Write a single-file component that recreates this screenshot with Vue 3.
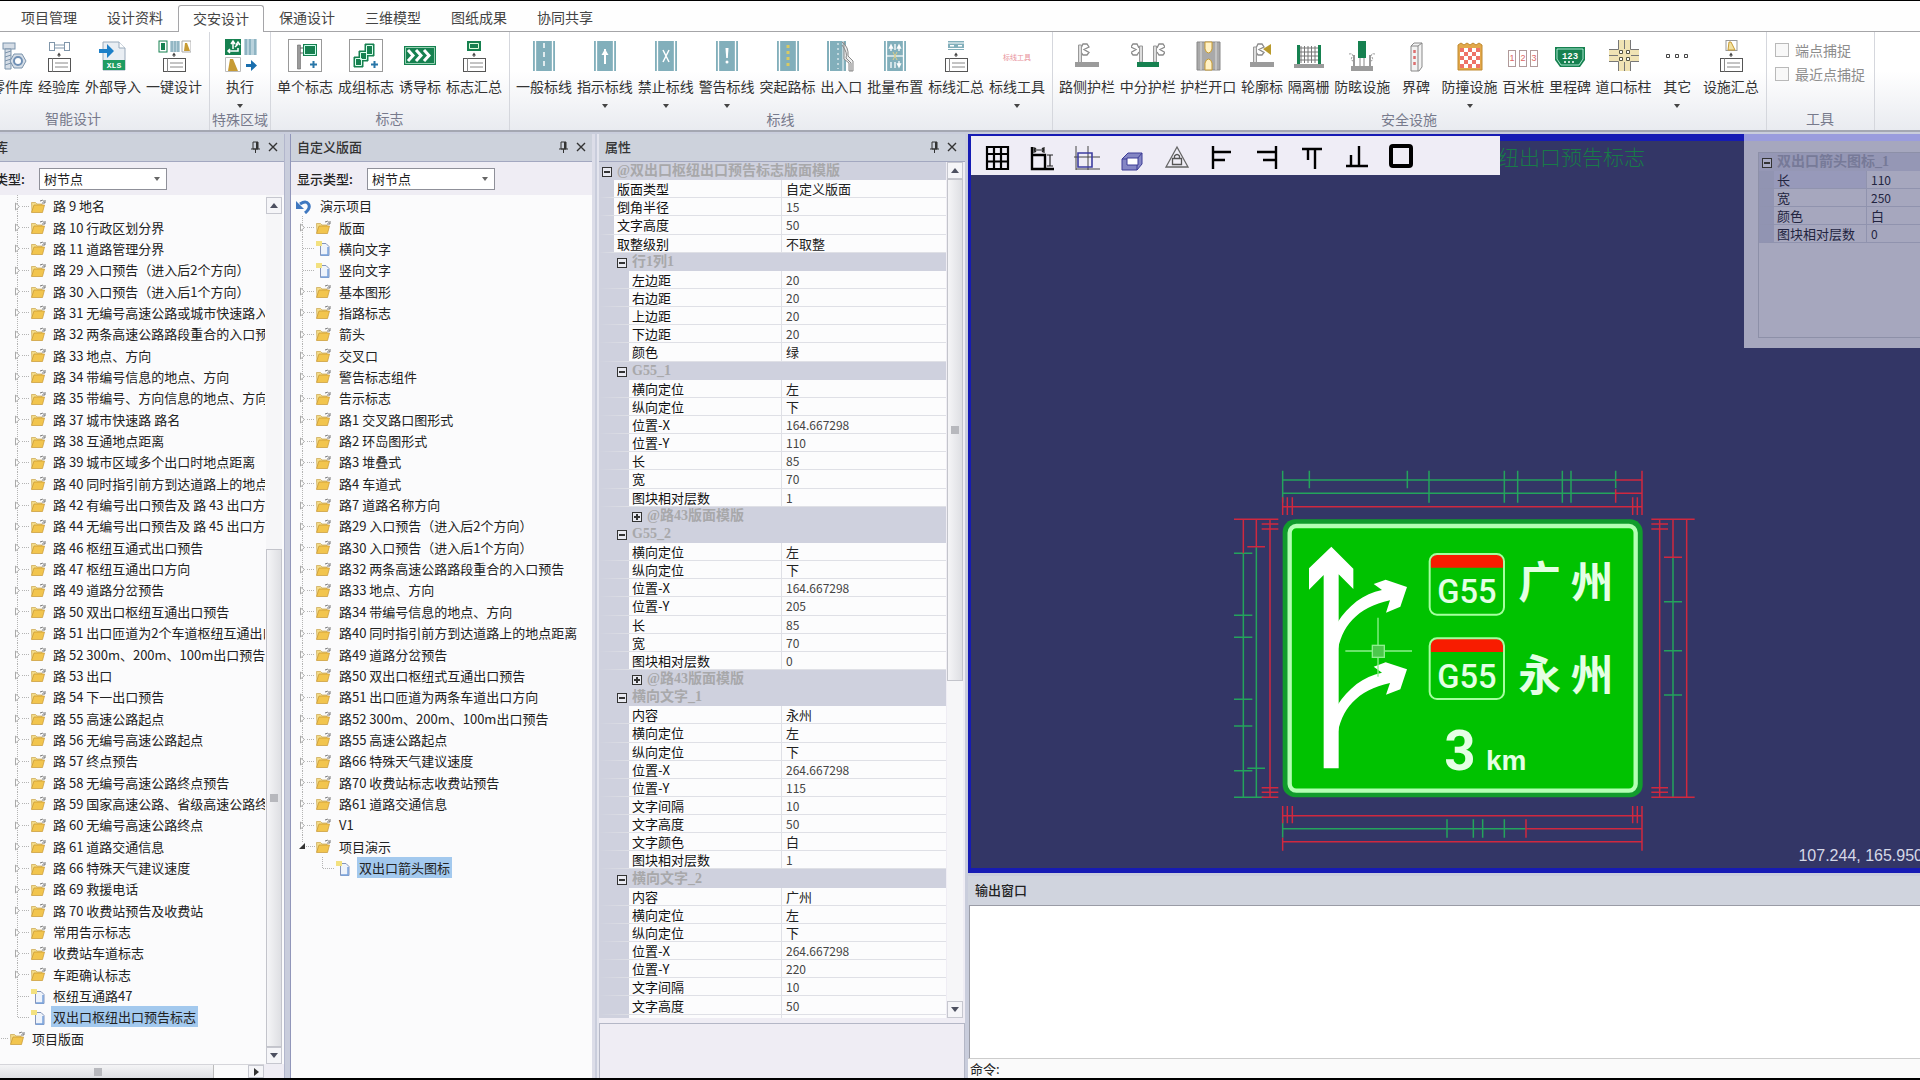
<template>
  <div class="app">
    <nav class="tabs">
      <button v-for="t in tabs" :key="t" class="tab" :class="{ active: t === activeTab }" @click="activeTab = t">{{ t }}</button>
    </nav>

    <div class="ribbon">
      <section v-for="g in groups" :key="g.name" class="group" :class="g.cls">
        <div class="tools">
          <button v-for="b in g.items" :key="b.label" class="tool">
            <svg class="tool-icon" viewBox="0 0 34 34" v-html="icons[b.icon]"></svg>
            <span class="tool-label">{{ b.label }}</span>
            <i v-if="b.more" class="caret"></i>
          </button>
        </div>
        <div class="group-name">{{ g.name }}</div>
      </section>
      <section class="group snap">
        <label class="check"><input type="checkbox" disabled />端点捕捉</label>
        <label class="check"><input type="checkbox" disabled />最近点捕捉</label>
        <div class="group-name">工具</div>
      </section>
    </div>

    <main class="dock">
      <aside v-for="p in treePanels" :key="p.id" class="panel" :class="p.id">
        <header class="panel-head">
          <h2>{{ p.title }}</h2>
          <button class="head-btn" aria-label="固定"><svg viewBox="0 0 12 14" v-html="pin"></svg></button>
          <button class="head-btn" aria-label="关闭"><svg viewBox="0 0 12 14" v-html="cross"></svg></button>
        </header>
        <div class="filter">
          <label :for="p.id + '-type'">显示类型:</label>
          <span class="combo">
            <select :id="p.id + '-type'"><option>树节点</option></select>
          </span>
        </div>
        <div class="tree-wrap">
          <ul class="tree">
            <li v-for="n in p.nodes" :key="n.text" class="node" :class="n.kind">
              <svg v-if="n.kind !== 'root'" class="branch" viewBox="0 0 16 22" v-html="branches[n.kind]"></svg>
              <svg class="node-icon" viewBox="0 0 16 16" v-html="nodeIcons[n.icon]"></svg>
              <span class="node-label" :class="{ selected: n.selected }">{{ n.text }}</span>
            </li>
          </ul>
          <div v-if="p.id === 'library'" class="vscroll">
            <button class="sb up" aria-label="向上"></button>
            <div class="thumb low"></div>
            <button class="sb down" aria-label="向下"></button>
          </div>
        </div>
        <div v-if="p.id === 'library'" class="hscroll">
          <div class="hthumb"></div>
          <button class="sb right" aria-label="向右"></button>
        </div>
      </aside>

      <aside class="panel props">
        <header class="panel-head">
          <h2>属性</h2>
          <button class="head-btn" aria-label="固定"><svg viewBox="0 0 12 14" v-html="pin"></svg></button>
          <button class="head-btn" aria-label="关闭"><svg viewBox="0 0 12 14" v-html="cross"></svg></button>
        </header>
        <div class="props-body">
          <div class="props-clip">
            <table class="grid">
              <colgroup><col class="col-name" /><col /></colgroup>
              <tbody>
                <tr v-for="(r, i) in rows" :key="i">
                  <th v-if="r.head" colspan="2" :class="'lv' + r.level">
                    <button class="fold" :class="{ closed: r.closed }" :aria-label="r.head"></button>{{ r.head }}
                  </th>
                  <template v-else>
                    <td class="name" :class="'lv' + r.level">{{ r.name }}</td>
                    <td class="value" :class="{ num: /^\d/.test(r.value) }">{{ r.value }}</td>
                  </template>
                </tr>
              </tbody>
            </table>
          </div>
          <div class="vscroll">
            <button class="sb up" aria-label="向上"></button>
            <div class="thumb high"></div>
            <button class="sb down" aria-label="向下"></button>
          </div>
        </div>
        <div class="hint"></div>
      </aside>

      <section class="work">
        <div class="canvas">
          <div class="caption">双出口枢纽出口预告标志</div>
          <div class="toolbar">
            <button v-for="c in canvasTools" :key="c.name" :aria-label="c.name">
              <svg viewBox="0 0 26 26" v-html="c.art"></svg>
            </button>
          </div>

          <svg class="drawing" viewBox="0 0 1500 1260">
            <g fill="none" stroke="#24a35c" stroke-width="4.5">
              <path d="M188 90H1187M188 130H1187M188 62V158M268 62V115M562 62V115M627 62V158M853 62V158M893 62V158M1027 62V158M1053 62V158M1187 62V115" />
              <path d="M188 1136H918M188 1108V1163M681 1108V1163M760 1108V1163M788 1108V1163M853 1108V1163" />
              <path d="M70 310V1042M109 290V1042M42 310H97M42 496H97M42 562H97M42 748H97M42 828H97M42 962H97M82 955H135M42 1042H130" />
              <path d="M1359 322V1042M1332 455H1386M1332 602H1386M1332 735H1386" />
            </g>
            <g fill="none" stroke="#d0283f" stroke-width="4.5">
              <path d="M1187 90H1266M1187 130H1266M1187 118V158M1266 62V195M188 170H1266M188 142V195M202 142V195M217 142V195M1238 142V195M1252 142V195" />
              <path d="M188 1097H1266M188 1068V1120M202 1068V1120M217 1068V1120M1238 1068V1120M1252 1068V1120M1266 1068V1202M918 1136H1266M918 1108V1163M188 1175H1266M188 1163V1202" />
              <path d="M42 208H175M70 208V310M109 208V290M82 290H135M150 208V1042M125 222H175M125 237H175M125 1013H175M125 1027H175M125 1042H175" />
              <path d="M1294 208H1424M1319 208V1042M1359 208V322M1400 208V1042M1294 222H1344M1294 237H1344M1332 322H1386M1294 1013H1344M1294 1027H1344M1294 1042H1424" />
            </g>
            <rect x="188" y="208" width="1080" height="834" rx="38" fill="#119c2c" />
            <rect x="209" y="228" width="1038" height="794" rx="20" fill="#00c200" stroke="#b4ffb4" stroke-width="13" />
            <g fill="#fff">
              <path d="M334 290L400 356V417L356 373V955H311V375L267 419V355Z" />
              <path d="M352 612C362 530 412 472 510 451L498 488L541 470L561 411L497 389L461 402L486 420C430 430 384 468 352 518Z" />
              <path d="M352 860C362 778 412 720 510 699L498 734L541 718L561 658L497 637L461 650L486 668C430 678 384 716 352 766Z" />
            </g>
            <g v-for="y in [0, 253]" :key="y" :transform="`translate(0 ${y})`">
              <path d="M632 353V334Q632 314 652 314H829Q849 314 849 334V353Z" fill="#f81c00" />
              <rect x="629" y="312" width="223" height="182" rx="22" fill="none" stroke="#a6ffa0" stroke-width="6" />
              <text x="741" y="460" text-anchor="middle" class="code">G55</text>
            </g>
            <text x="895" y="445" class="city">广 州</text>
            <text x="895" y="724" class="city">永 州</text>
            <text x="720" y="961" text-anchor="middle" class="dist">3</text>
            <text x="798" y="961" class="unit">km</text>
            <g stroke="#8df08d" stroke-width="4" fill="#4cc84c">
              <path d="M376 603H576M474 503V680" />
              <rect x="457" y="586" width="36" height="36" />
            </g>
          </svg>

          <div class="float">
            <div class="float-box">
              <table class="grid">
                <colgroup><col class="col-name" /><col /></colgroup>
                <tbody>
                  <tr>
                    <th colspan="2" class="lv0"><button class="fold" aria-label="折叠"></button>双出口箭头图标_1</th>
                  </tr>
                  <tr v-for="(r, i) in floatRows" :key="r[0]">
                    <td class="name lv0" :class="{ current: i === 0 }">{{ r[0] }}</td>
                    <td class="value" :class="{ num: /^\d/.test(r[1]) }">{{ r[1] }}</td>
                  </tr>
                </tbody>
              </table>
            </div>
          </div>
          <div class="coords">107.244, 165.950</div>
        </div>

        <header class="output-head"><h2>输出窗口</h2></header>
        <div class="output"></div>
        <div class="command">
          <label for="cmd">命令:</label>
          <input id="cmd" type="text" v-model="command" />
        </div>
      </section>
    </main>
  </div>
</template>

<script setup>
import { ref } from 'vue';

const tabs = ['项目管理', '设计资料', '交安设计', '保通设计', '三维模型', '图纸成果', '协同共享'];
const activeTab = ref('交安设计');
const command = ref('');

const groups = [
  {
    name: '智能设计',
    cls: 'g-smart',
    items: [
      { label: '零件库', icon: 'parts' },
      { label: '经验库', icon: 'exp' },
      { label: '外部导入', icon: 'xls' },
      { label: '一键设计', icon: 'onekey' },
    ],
  },
  { name: '特殊区域', cls: 'g-area', items: [{ label: '执行', icon: 'exec', more: true }] },
  {
    name: '标志',
    cls: 'g-sign',
    items: [
      { label: '单个标志', icon: 'single' },
      { label: '成组标志', icon: 'multi' },
      { label: '诱导标', icon: 'guide' },
      { label: '标志汇总', icon: 'signSum' },
    ],
  },
  {
    name: '标线',
    cls: 'g-line',
    items: [
      { label: '一般标线', icon: 'roadDash' },
      { label: '指示标线', icon: 'roadArrow', more: true },
      { label: '禁止标线', icon: 'roadX', more: true },
      { label: '警告标线', icon: 'roadWarn', more: true },
      { label: '突起路标', icon: 'roadDots' },
      { label: '出入口', icon: 'ramp' },
      { label: '批量布置', icon: 'batch' },
      { label: '标线汇总', icon: 'lineSum' },
      { label: '标线工具', icon: 'lineTool', more: true },
    ],
  },
  {
    name: '安全设施',
    cls: 'g-safe',
    items: [
      { label: '路侧护栏', icon: 'railSide' },
      { label: '中分护栏', icon: 'railMid' },
      { label: '护栏开口', icon: 'railOpen' },
      { label: '轮廓标', icon: 'outline' },
      { label: '隔离栅', icon: 'fence' },
      { label: '防眩设施', icon: 'glare' },
      { label: '界碑', icon: 'stele' },
      { label: '防撞设施', icon: 'crash', more: true },
      { label: '百米桩', icon: 'post' },
      { label: '里程碑', icon: 'mile' },
      { label: '道口标柱', icon: 'crossing' },
      { label: '其它', icon: 'other', more: true },
      { label: '设施汇总', icon: 'facSum' },
    ],
  },
];

const sheet = '<g fill="#fff" stroke="#555"><rect x="6.500" y="20.500" width="22" height="13"/><path d="M10.500 20.500v13M13 25h13M13 29h13" stroke="#888"/></g><path d="M15 17.500h4l-2-3zM16.500 16v3h1v-3z" fill="#444"/>';
const road = (inner) => `<path d="M6 3h22v30H6z" fill="#82afbb"/><path d="M8.500 3v30M25.500 3v30" stroke="#fff" stroke-width="1.300"/>${inner}`;
// w-beam profile, f = 1 opens right, f = -1 opens left
const hook = (x, f) =>
  `<path d="M${x} 10l${2 * f} -4h${4 * f}l${2 * f} 3l${-5 * f} 2.500l${5 * f} 3l${-2 * f} 2.500h${-4 * f}l${-2 * f} -3" fill="none" stroke="#8a8a8a" stroke-width="1.300"/>`;

const icons = {
  parts: '<g fill="#d5dde6" stroke="#7b93ab"><rect x="8" y="5" width="12" height="6"/><path d="M10 11v20h6V11zM10 15l6-2M10 19l6-2M10 23l6-2M10 27l6-2"/><path d="M19 16h8l4 7-4 7h-8l-4-7z"/></g><circle cx="23" cy="23" r="4" fill="#fff" stroke="#7090b5" stroke-width="2"/>',
  exp: '<g fill="none" stroke="#8096aa"><rect x="7.500" y="4.500" width="5" height="8"/><rect x="22.500" y="4.500" width="5" height="8"/><path d="M12 7h10M12 10h10"/></g>' + sheet,
  xls: '<path d="M7 4h16l6 6v22H7z" fill="#e9eef3" stroke="#9ab"/><path d="M23 4v6h6" fill="#fff" stroke="#9ab"/><path d="M3 11h8V6l7 7-7 7v-5H3z" fill="#1d80c8"/><path d="M7 22h22v10H7z" fill="#1e9c62"/><text x="18" y="30" font-size="8" font-weight="700" fill="#fff" text-anchor="middle" font-family="Liberation Mono">XLS</text>',
  onekey: '<rect x="2" y="3" width="8" height="11" fill="#fff" stroke="#168150"/><path d="M4 5h4v7H4z" fill="#168150"/><path d="M13 3h10v11H13z" fill="#b9d2dc"/><path d="M15 3v11M18 3v11M21 3v11" stroke="#6f9cac"/><path d="M25 3h9v11h-9z" fill="#fff" stroke="#aaa"/><path d="M27 13l1-8h2l3 8z" fill="#c79b34"/>' + sheet,
  exec: '<path d="M2 1h16v16H2z" fill="#168150"/><path d="M6 13h9v-3M15 6l-3 3M10 11V4M8 6l2-3 2 3M13 7l2-3 2 3M7 11l-2 2 2 2" fill="none" stroke="#fff" stroke-width="1.500"/><path d="M21 1h13v16H21z" fill="#b9d2dc"/><path d="M23 1v16M27 1v16M32 1v16" stroke="#6495a8"/><path d="M2.500 19.500h15v14h-15z" fill="#fff" stroke="#bbb"/><path d="M5 33l2-12h3l5 12z" fill="#c79b34"/><path d="M23 26h5v-4l6 5.500-6 5.500v-4h-5z" fill="#1a6fae"/>',
  single: '<rect x=".5" y="1.500" width="33" height="32" fill="#fff" stroke="#999"/><path d="M9.500 7h3v24h-3z" fill="#9a9a9a" stroke="#666" stroke-width=".6"/><path d="M12 10h3M12 15h3" stroke="#666"/><path d="M15 6h14v12H15z" fill="#168150"/><path d="M16.500 7.500h11v9h-11z" fill="none" stroke="#cfe"/><path d="M25.500 23v7M22 26.500h7" stroke="#2876a8" stroke-width="2"/>',
  multi: '<rect x=".5" y="1.500" width="33" height="32" fill="#fff" stroke="#999"/><g fill="#168150" stroke="#168150"><path d="M5 19h9v10H5zM10 13h9v10h-9zM16 6h9v12h-9z"/></g><path d="M6.500 20.500h6v7h-6zM11.500 14.500h6v7h-6zM17.500 7.500h6v9h-6z" fill="#168150" stroke="#dfe"/><path d="M25.500 23v7M22 26.500h7" stroke="#2876a8" stroke-width="2"/>',
  guide: '<path d="M1 8h32v19H1z" fill="#168150"/><path d="M2.500 9.500h29v16h-29z" fill="none" stroke="#b8e4cc" stroke-width=".8"/><path d="M5 12l5 5.500L5 23M13 12l5 5.500-5 5.500M21 12l5 5.500-5 5.500" fill="none" stroke="#fff" stroke-width="3"/>',
  signSum: '<path d="M10 3h14v10H10z" fill="#168150"/><path d="M12.500 5.500h9v5h-9z" fill="#168150" stroke="#dfd"/>' + sheet,
  roadDash: road('<path d="M17 5v26" stroke="#fff" stroke-width="1.500" stroke-dasharray="5 4"/>'),
  roadArrow: road('<path d="M17 11v15" stroke="#fff" stroke-width="2"/><path d="M13.500 17l3.500-6 3.500 6z" fill="#fff"/>'),
  roadX: road('<path d="M14 12l6 12M20 12l-6 12" stroke="#fff" stroke-width="1.500"/>'),
  roadWarn: road('<path d="M15.500 10h3l-.7 10h-1.600z" fill="#fff"/><circle cx="17" cy="24" r="1.500" fill="#fff"/>'),
  roadDots: road('<path d="M17 7v24" stroke="#d8ca62" stroke-width="3" stroke-dasharray="3 3"/>'),
  ramp: '<path d="M3 3h19v30H3z" fill="#82afbb"/><path d="M5.500 3v30M19 3v30" stroke="#fff"/><path d="M14 5v26" stroke="#fff" stroke-dasharray="2 3"/><path d="M18 4q7 5 6 14l5 5v10h-4v-8l-5-4V4" fill="#eee" stroke="#888"/><path d="M18 7q6 8 4 13l5 5v8" fill="none" stroke="#888"/>',
  batch: road('<path d="M9 18h17" stroke="#fff" stroke-width="1.200"/><path d="M13 13V7M13 7l-1.500 3h3zM17 12V6M21 13V7M21 7l-1.500 3h3zM13 30v-6M21 23v6M21 29l-1.500-3h3zM17 30v-6" stroke="#fff" stroke-width="1.300"/><path d="M15 14l4 8M19 14l-4 8" stroke="#dccf8a"/>'),
  lineSum: '<path d="M9 3h16v9H9z" fill="#82afbb"/><path d="M9 5h16M9 10.500h16" stroke="#fff"/><path d="M11 7.700h4M19 7.700h4" stroke="#fff" stroke-width="1.500"/>' + sheet,
  lineTool: '<text x="17" y="22" font-size="7" fill="#e8929a" text-anchor="middle">标线工具</text>',
  railSide: hook(11, 1) + '<path d="M8.500 7h3v18h-3z" fill="#ddd" stroke="#999"/><path d="M5 24h24v5H5z" fill="#9b9b9b"/>',
  railMid: hook(8, -1) + hook(26, 1) + '<path d="M8.500 8h3v16h-3zM22.500 8h3v16h-3z" fill="#ddd" stroke="#999"/><path d="M6 24h22v5H6z" fill="#168150"/>',
  railOpen: '<path d="M6 4h23v28H6z" fill="#a9a9a9" stroke="#888"/><path d="M10 4v28M25 4v28" stroke="#ddd"/><path d="M14 4h7v7q-1 4-3.500 4T14 11zM14 32h7v-7q-1-4-3.500-4T14 25z" fill="#fff1c4" stroke="#c79b34"/>',
  outline: hook(11, 1) + '<path d="M8.500 9h3v16h-3z" fill="#ddd" stroke="#999"/><path d="M18 11l8-5v11z" fill="#b99a2c"/><path d="M5 24h24v5H5z" fill="#9b9b9b"/>',
  fence: '<path d="M6 8h22v17H6z" fill="#fff"/><path d="M6 10h22M6 14h22M6 18h22M6 22h22M9 8v17M12.500 8v17M16 8v17M19.500 8v17M23 8v17" stroke="#777"/><path d="M5 7h3v19H5zM26 7h3v19h-3z" fill="#168150"/><path d="M2 26h30v4H2z" fill="#9b9b9b"/>',
  glare: '<path d="M13 3h8v17h-8z" fill="#168150"/><path d="M15 20v8M19 20v8" stroke="#888"/><path d="M4 16q5-1 3 3t2 4M30 16q-5-1-3 3t-2 4" fill="none" stroke="#999" stroke-dasharray="2 1"/><path d="M9 17v11M25 17v11" stroke="#999" stroke-width="2"/><path d="M6 28h22v5H6z" fill="#9b9b9b"/>',
  stele: '<path d="M12 8l3-3h8v24l-3 4h-8z" fill="#f3f3f3" stroke="#888"/><path d="M12 8h7v25M19 8l4-3" fill="none" stroke="#888"/><path d="M15.500 12v18" stroke="#dd7070" stroke-width="2.500" stroke-dasharray="3 3"/>',
  crash: '<path d="M5 7l3-2 3 2 3-2 3 2 3-2 3 2 3-2 3 2v25H5z" fill="#e3a84a" stroke="#c08a30"/><path d="M7 10h20v20H7z" fill="#fff"/><path d="M7 10h4v4H7zM15 10h4v4h-4zM23 10h4v4h-4zM11 14h4v4h-4zM19 14h4v4h-4zM7 18h4v4H7zM15 18h4v4h-4zM23 18h4v4h-4zM11 22h4v4h-4zM19 22h4v4h-4zM7 26h4v4H7zM15 26h4v4h-4zM23 26h4v4h-4z" fill="#ee7268"/>',
  post: '<g fill="#fff" stroke="#b09a9a"><rect x="2.500" y="12.500" width="7" height="16"/><rect x="13.500" y="12.500" width="7" height="16"/><rect x="24.500" y="12.500" width="7" height="16"/></g><g font-size="9" fill="#d66" text-anchor="middle" font-family="Liberation Sans"><text x="6" y="23">1</text><text x="17" y="23">2</text><text x="28" y="23">3</text></g>',
  mile: '<path d="M2 9h30v13l-5 7H7l-5-7z" fill="#168150"/><path d="M4 11h26v10l-4 6H8l-4-6z" fill="none" stroke="#cfe" stroke-width=".8"/><text x="17" y="21" font-size="9" font-weight="700" fill="#fff" text-anchor="middle" font-family="Liberation Mono">123</text><path d="M11 24h12" stroke="#fff" stroke-width="1.500" stroke-dasharray="2 2"/>',
  crossing: '<path d="M11 2h13v31H11zM2 11h30v13H2z" fill="#f0e3b4"/><path d="M11.500 2v9.500H2M23.500 2v9.500H32M11.500 33v-9.500H2M23.500 33v-9.500H32" fill="none" stroke="#777"/><path d="M17.500 2v9M17.500 24v9M2 17.500h9M24 17.500h8" stroke="#777"/><path d="M12.500 12.500h3v3h-3zM19.500 12.500h3v3h-3zM12.500 19.500h3v3h-3zM19.500 19.500h3v3h-3z" fill="#fff" stroke="#554"/>',
  other: '<path d="M6.500 16.500h3v3h-3zM15.500 16.500h3v3h-3zM24.500 16.500h3v3h-3z" fill="none" stroke="#444"/>',
  facSum: '<rect x="12" y="2.500" width="11" height="10" fill="#fff" stroke="#999"/><path d="M14 12l1-8h2l4 8z" fill="#f3e2a0" stroke="#c79b34"/>' + sheet,
};

const pin = '<path d="M4 2h5v7H4zM2 9h9M6.500 9v4" fill="none" stroke="#333"/><path d="M7 2h2v7H7z" fill="#333"/>';
const cross = '<path d="M2 3l8 8M10 3l-8 8" stroke="#333" stroke-width="1.400"/>';

const guideLine = (d) => `<path d="${d}" fill="none" stroke="#b4b4b4" stroke-dasharray="1 1"/>`;
const branches = {
  folder: guideLine('M3.500 0v22M8 11.500h8') + '<path d="M1.500 8v7l4-3.500z" fill="#fff" stroke="#aaa"/>',
  leaf: guideLine('M3.500 0v22M4 11.500h12'),
  last: guideLine('M3.500 0v11.500H16'),
  open: guideLine('M3.500 0v8M7 11.500h9') + '<path d="M0 14h6V8z" fill="#333"/>',
  child: guideLine('M3.500 0v11.500H16'),
  outer: guideLine('M0 11.500h16'),
};
const nodeIcons = {
  folder: '<path d="M1.500 4.500h4L7 6h5v2H5l-3 6z" fill="#f3dc8a" stroke="#c9a34a" stroke-width=".7"/><path d="M4 7h10.500L12.500 14.500H1.500z" fill="#f2c54e" stroke="#c79632" stroke-width=".7"/><path d="M10 3q3-2 4.500 1M15 2v3h-3" fill="none" stroke="#777"/>',
  file: '<path d="M5.500 3.500H11l3 3v9H5.500z" fill="#eef3fb" stroke="#8494b8"/><path d="M13 7v8H6" fill="none" stroke="#7aa3dc" stroke-width="1.500"/><path d="M1 1h6v5H1z" fill="#f3e180"/>',
  undo: '<path d="M4 6q6-4 8.500 0T9 15" fill="none" stroke="#3f78c0" stroke-width="3"/><path d="M0 3v8h8z" fill="#3f78c0"/>',
};

const folder = (text) => ({ kind: 'folder', icon: 'folder', text });

const treePanels = [
  {
    id: 'library',
    title: '版面库',
    nodes: [
      ...[
        '路 9 地名', '路 10 行政区划分界', '路 11 道路管理分界', '路 29 入口预告（进入后2个方向）', '路 30 入口预告（进入后1个方向）',
        '路 31 无编号高速公路或城市快速路入口预告', '路 32 两条高速公路路段重合的入口预告', '路 33 地点、方向', '路 34 带编号信息的地点、方向',
        '路 35 带编号、方向信息的地点、方向', '路 37 城市快速路 路名', '路 38 互通地点距离', '路 39 城市区域多个出口时地点距离',
        '路 40 同时指引前方到达道路上的地点距离', '路 42 有编号出口预告及 路 43 出口方向', '路 44 无编号出口预告及 路 45 出口方向',
        '路 46 枢纽互通式出口预告', '路 47 枢纽互通出口方向', '路 49 道路分岔预告', '路 50 双出口枢纽互通出口预告',
        '路 51 出口匝道为2个车道枢纽互通出口', '路 52 300m、200m、100m出口预告', '路 53 出口', '路 54 下一出口预告', '路 55 高速公路起点',
        '路 56 无编号高速公路起点', '路 57 终点预告', '路 58 无编号高速公路终点预告', '路 59 国家高速公路、省级高速公路终点',
        '路 60 无编号高速公路终点', '路 61 道路交通信息', '路 66 特殊天气建议速度', '路 69 救援电话', '路 70 收费站预告及收费站',
        '常用告示标志', '收费站车道标志', '车距确认标志',
      ].map(folder),
      { kind: 'leaf', icon: 'file', text: '枢纽互通路47' },
      { kind: 'last', icon: 'file', text: '双出口枢纽出口预告标志', selected: true },
      { kind: 'outer', icon: 'folder', text: '项目版面' },
    ],
  },
  {
    id: 'custom',
    title: '自定义版面',
    nodes: [
      { kind: 'root', icon: 'undo', text: '演示项目' },
      folder('版面'),
      { kind: 'leaf', icon: 'file', text: '横向文字' },
      { kind: 'leaf', icon: 'file', text: '竖向文字' },
      ...[
        '基本图形', '指路标志', '箭头', '交叉口', '警告标志组件', '告示标志', '路1 交叉路口图形式', '路2 环岛图形式', '路3 堆叠式',
        '路4 车道式', '路7 道路名称方向', '路29 入口预告（进入后2个方向）', '路30 入口预告（进入后1个方向）',
        '路32 两条高速公路路段重合的入口预告', '路33 地点、方向', '路34 带编号信息的地点、方向', '路40 同时指引前方到达道路上的地点距离',
        '路49 道路分岔预告', '路50 双出口枢纽式互通出口预告', '路51 出口匝道为两条车道出口方向', '路52 300m、200m、100m出口预告',
        '路55 高速公路起点', '路66 特殊天气建议速度', '路70 收费站标志收费站预告', '路61 道路交通信息', 'V1',
      ].map(folder),
      { kind: 'open', icon: 'folder', text: '项目演示' },
      { kind: 'child', icon: 'file', text: '双出口箭头图标', selected: true },
    ],
  },
];

const props = (level, pairs) => pairs.map(([name, value]) => ({ level, name, value }));
const badge = (y, layer) =>
  props(1, [['横向定位', '左'], ['纵向定位', '下'], ['位置-X', '164.667298'], ['位置-Y', y], ['长', '85'], ['宽', '70'], ['图块相对层数', layer]]);
const place = (city, y) =>
  props(1, [
    ['内容', city], ['横向定位', '左'], ['纵向定位', '下'], ['位置-X', '264.667298'], ['位置-Y', y],
    ['文字间隔', '10'], ['文字高度', '50'], ['文字颜色', '白'], ['图块相对层数', '1'],
  ]);

const rows = [
  { head: '@双出口枢纽出口预告标志版面模版', level: 0 },
  ...props(0, [['版面类型', '自定义版面'], ['倒角半径', '15'], ['文字高度', '50'], ['取整级别', '不取整']]),
  { head: '行1列1', level: 1 },
  ...props(1, [['左边距', '20'], ['右边距', '20'], ['上边距', '20'], ['下边距', '20'], ['颜色', '绿']]),
  { head: 'G55_1', level: 1 },
  ...badge('110', '1'),
  { head: '@路43版面模版', level: 2, closed: true },
  { head: 'G55_2', level: 1 },
  ...badge('205', '0'),
  { head: '@路43版面模版', level: 2, closed: true },
  { head: '横向文字_1', level: 1 },
  ...place('永州', '115'),
  { head: '横向文字_2', level: 1 },
  ...place('广州', '220').slice(0, 8),
];

const floatRows = [['长', '110'], ['宽', '250'], ['颜色', '白'], ['图块相对层数', '0']];

const canvasTools = [
  { name: '网格', art: '<path d="M3 2h21v22H3zM3 9h21M3 16.500h21M10 2v22M17 2v22" fill="none" stroke="#000" stroke-width="2.200"/>' },
  { name: '标注', art: '<path d="M3 2v22h22M3 10h13v14" fill="none" stroke="#000" stroke-width="2.400"/><path d="M5 5h10M5 2v6M15 2v6M21 10v11M18 10h6M18 21h6M7 3l-2 2 2 2M13 3l2 2-2 2" fill="none" stroke="#222" stroke-width="1.200"/>' },
  { name: '对齐框', art: '<path d="M2 1v24M14 1v24M0 12h26M2 24h24" fill="none" stroke="#444"/><path d="M4 8h14v14H4z" fill="none" stroke="#3c3ca0" stroke-width="1.600"/>' },
  { name: '图块', art: '<path d="M3 14l6-6h14v11l-5 6H3z" fill="#8486c4" stroke="#3c3c96"/><path d="M3 14h15v11M18 14l5-6" fill="none" stroke="#3c3c96"/><path d="M8 13h11v7H8z" fill="#fff" stroke="#3c3c96"/>' },
  { name: '锁定', art: '<path d="M13 2L24 22H2z" fill="none" stroke="#666" stroke-width="1.300"/><path d="M8.500 13.500h9v6h-9zM10.500 13v-2q2.500-3 5 0v2" fill="none" stroke="#555" stroke-width="1.300"/>' },
  { name: '左对齐', art: '<path d="M4 1v23M4 7h18M4 15h12" stroke="#000" stroke-width="2.400"/>' },
  { name: '右对齐', art: '<path d="M22 1v23M22 7H3M22 15H9" stroke="#000" stroke-width="2.400"/>' },
  { name: '上对齐', art: '<path d="M3 4h20M9 4v11M16 4v20" stroke="#000" stroke-width="2.400"/>' },
  { name: '下对齐', art: '<path d="M2 21h22M7 21V10M15 21V1" stroke="#000" stroke-width="2.400"/>' },
  { name: '边框', art: '<rect x="2" y="1" width="20" height="20" rx="2" fill="none" stroke="#000" stroke-width="4"/>' },
];
</script>

<style>
body { margin: 0; background: #000; }
</style>

<style scoped>
.app { display: flex; flex-direction: column; height: 100vh; box-sizing: border-box; border-top: 1px solid #000; border-bottom: 2px solid #000; background: #c9cddc; color: #222; font: 13px/18px "Noto Sans CJK SC", sans-serif; overflow: hidden; }
button { padding: 0; border: 0; background: none; color: inherit; font: inherit; }
h2 { margin: 0; font-size: 13px; font-weight: 500; }

.tabs { display: flex; flex: none; height: 31px; padding: 4px 0 0 6px; box-sizing: border-box; background: #fefefe; border-bottom: 1px solid #a5a5a8; }
.tab { padding: 0 14px 3px; border: 1px solid transparent; border-bottom: 0; color: #444; font-size: 14px; }
.tab.active { height: 28px; border-color: #a5a5a8; border-radius: 3px 3px 0 0; background: #fff; }

.ribbon { display: flex; flex: none; height: 100px; box-sizing: border-box; overflow: hidden; background: linear-gradient(#fff 40%, #e9ebf0); border-bottom: 2px solid #a4a7b2; }
.group { display: flex; flex-direction: column; flex: none; box-sizing: border-box; padding: 6px 7px 1px 6px; border-right: 1px solid #d5d7dd; }
.tools { display: flex; justify-content: space-between; }
.tool { display: flex; flex-direction: column; align-items: center; min-width: 42px; color: #333; font-size: 14px; line-height: 20px; white-space: nowrap; }
.tool-icon { width: 34px; height: 34px; margin-bottom: 4px; }
.caret { margin-top: 8px; border: 3px solid transparent; border-top: 4px solid #444; border-bottom: 0; }
.group-name { margin-top: auto; color: #777a8c; font-size: 14px; line-height: 22px; text-align: center; }
.g-smart { width: 272px; margin-left: -62px; }
.g-smart .tools { justify-content: flex-end; gap: 5px; }
.g-area { width: 61px; padding: 6px 0 1px; }
.g-area .tools { justify-content: center; }
.g-sign { width: 239px; }
.g-line { width: 543px; }
.g-safe { width: 714px; }
.snap { width: 108px; }
.check { display: flex; align-items: center; gap: 6px; height: 25px; margin: -1px 0 0 2px; color: #8d8d8d; font-size: 14px; white-space: nowrap; }
.check input { appearance: none; flex: none; width: 14px; height: 14px; margin: 0; border: 1px solid #b9b9b9; background: #f8f8f8; }

.dock { display: flex; flex: 1; min-height: 0; padding-top: 2px; }
.panel { display: flex; flex-direction: column; flex: none; box-sizing: border-box; min-height: 0; background: #efedf4; }
.library { width: 322px; margin-left: -37px; border-right: 1px solid #b2b6cc; }
.custom { width: 305px; margin-left: 5px; border-left: 1px solid #9196ba; border-right: 3px solid #dcdde8; }
.props { width: 368px; margin-left: 2px; border-left: 2px solid #e4e5ee; }
.panel-head { display: flex; align-items: center; flex: none; gap: 4px; height: 28px; box-sizing: border-box; padding: 0 4px 2px 6px; background: #cdd2dc; border-bottom: 1px solid #a3a8c0; }
.panel-head h2 { flex: 1; color: #333; }
.props .panel-head { padding-right: 6px; }
.head-btn { width: 14px; height: 14px; }
.head-btn svg { display: block; width: 12px; height: 14px; margin: 0 auto; }

.filter { display: flex; align-items: center; flex: none; height: 33px; padding-left: 6px; }
.filter label { width: 70px; font-weight: 500; }
.combo { position: relative; width: 128px; height: 22px; }
.combo select { appearance: none; width: 100%; height: 100%; padding: 0 4px; border: 1px solid #8f9099; border-radius: 0; background: #fff; color: #222; font: inherit; }
.combo::after { content: ""; position: absolute; right: 7px; top: 9px; border: 3px solid transparent; border-top: 4px solid #666; border-bottom: 0; }

.tree-wrap { display: flex; flex: 1; min-height: 0; background: #fbfbfc; }
.tree { display: grid; grid-template-rows: repeat(40, 1fr); flex: 1; min-width: 0; margin: 0; padding: 0 0 15px; overflow: hidden; list-style: none; }
.custom .tree { padding-bottom: 29px; }
.node { display: flex; align-items: center; min-height: 0; padding-left: 8px; white-space: nowrap; }
.library .node { padding-left: 51px; }
.library .node.outer { padding-left: 30px; }
.node.root { padding-left: 5px; }
.node.child { padding-left: 28px; }
.branch { flex: none; width: 16px; height: 22px; }
.node-icon { flex: none; width: 16px; height: 16px; margin-right: 5px; }
.custom .node-icon { margin-right: 6px; }
.node-label { padding: 0 2px; line-height: 21px; }
.node-label.selected { background: #a3c9ee; }

.vscroll { display: flex; flex-direction: column; flex: none; width: 16px; margin: 0 2px 0 1px; background: #f6f6f8; }
.sb { position: relative; flex: none; width: 16px; height: 17px; box-sizing: border-box; border: 1px solid #c6c7cf; background: #f5f5f8; }
.sb::after { content: ""; position: absolute; left: 3px; top: 5px; border: 4px solid transparent; }
.sb.up::after { border-top: 0; border-bottom: 5px solid #4d5060; }
.sb.down::after { border-bottom: 0; border-top: 5px solid #4d5060; }
.sb.right::after { left: 5px; top: 2px; border-right: 0; border-left: 5px solid #333; }
.thumb { box-sizing: border-box; border: 1px solid #c3c4cb; background: linear-gradient(90deg, #f5f5f7, #dedfe3); display: flex; align-items: center; justify-content: center; }
.thumb::after, .hthumb::after { content: ""; width: 8px; height: 8px; background: #b7b8bd; }
.thumb.low { flex: 1; margin-top: 335px; }
.thumb.high { height: 502px; margin-bottom: auto; }
.library .vscroll { padding-top: 2px; }
.hscroll { display: flex; flex: none; justify-content: space-between; height: 14px; margin-right: 20px; border-top: 1px solid #d5d5da; box-sizing: border-box; background: #fafafb; }
.hthumb { display: flex; align-items: center; justify-content: center; width: 251px; padding-left: 20px; box-sizing: border-box; border-right: 1px solid #bbb; background: linear-gradient(#f4f4f6, #dddee2); }
.sb.right { height: 13px; }

.props-body { display: flex; flex: 1; min-height: 0; background: #efedf4; }
.props-clip { flex: 1; min-width: 0; overflow: hidden; }
.grid { width: 100%; border-collapse: separate; border-spacing: 0; table-layout: fixed; line-height: 17px; }
.props .grid { height: calc(100% + 15px); }
.props .col-name { width: 182px; }
.float .col-name { width: 107px; }
.grid th, .grid td { height: 17px; padding: 0; overflow: hidden; text-align: left; white-space: nowrap; }
.grid th { background: #cfd1de; color: #a8a8aa; border-bottom: 1px solid #cfd1de; font: 700 14px/17px "Liberation Serif", "Noto Sans CJK SC", serif; }
.grid td { border-bottom: 1px solid #dfe0e6; background: #fcfcfd; }
.grid .name { padding-left: 3px; border-left: 15px solid #cfd1de; color: #111; }
.grid .name.lv1 { border-left-width: 30px; }
.grid .value { padding-left: 4px; border-left: 1px solid #dfe0e6; }
.grid .num { color: #444; font-size: 12px; }
.grid th.lv0 { padding-left: 3px; }
.grid th.lv1 { padding-left: 18px; }
.grid th.lv2 { padding-left: 33px; }
.fold { position: relative; width: 10px; height: 10px; margin-right: 5px; box-sizing: border-box; border: 1px solid #333; background: #e8e9f0; vertical-align: -1px; }
.fold::before, .fold.closed::after { content: ""; position: absolute; left: 1px; top: 3px; width: 6px; height: 2px; background: #333; }
.fold.closed::after { left: 3px; top: 1px; width: 2px; height: 6px; }
.hint { flex: none; height: 55px; margin-top: 5px; box-sizing: border-box; border: 1px solid #b4b7c6; border-bottom: 0; }

.work { display: flex; flex-direction: column; flex: 1; min-width: 0; margin-left: 3px; }
.canvas { position: relative; flex: 1; min-height: 0; overflow: hidden; box-sizing: border-box; background: #333666; border: solid #161bb4; border-width: 0 0 5px 3px; box-shadow: inset 0 7px #161bb4; }
.caption { position: absolute; left: 443px; top: 8px; color: #187a48; font-size: 21px; font-weight: 300; line-height: 28px; white-space: nowrap; }
.toolbar { position: absolute; left: -2px; top: 2px; display: flex; width: 531px; height: 39px; box-sizing: border-box; padding-left: 4px; border-left: 1px dotted #888; background: #efedf6; }
.toolbar button { display: grid; place-items: center; width: 45px; height: 44px; }
.toolbar svg { width: 26px; height: 26px; overflow: visible; }
.drawing { position: absolute; left: 249px; top: 316px; width: 500px; height: 420px; }
.drawing text { fill: #e4ffe4; }
.code { font: 500 98px Roboto, sans-serif; }
.dist { font: 700 164px Roboto, sans-serif; }
.unit { font: 700 84px "Liberation Sans", sans-serif; }
.city { font: 700 128px "Noto Sans CJK SC", sans-serif; }

.float { position: absolute; right: 0; top: 0; width: 176px; height: 214px; padding: 18px 0 10px 14px; box-sizing: border-box; background: rgba(243, 243, 249, .6); }
.float-box { height: 100%; box-sizing: border-box; border: 1px solid #8d90a8; border-right: 0; }
.float .grid th { background: #9597b5; color: #777a98; border-color: #9597b5; }
.float .grid td { background: transparent; border-color: #9093ae; color: #222440; }
.float .grid .name { border-left-color: #9194b2; }
.float .grid .name.current { background: #9799ba; }
.float .fold { background: #a9abc4; }
.coords { position: absolute; right: -3px; bottom: 2px; color: #d5d8e6; font: 16px/20px "Liberation Sans", sans-serif; white-space: nowrap; }

.output-head { display: flex; align-items: center; flex: none; height: 29px; margin-top: 3px; padding: 0 0 2px 7px; box-sizing: border-box; background: #d0d4de; }
.output { flex: none; height: 153px; margin-left: 1px; box-sizing: border-box; border: 1px solid #9a9ca6; border-width: 1px 0 0 1px; background: #fff; }
.command { display: flex; flex: none; align-items: center; height: 20px; padding-left: 2px; border-top: 1px solid #ccc; box-sizing: border-box; background: #fafafa; }
.command input { flex: 1; height: 18px; margin-left: 4px; padding: 0; border: 0; outline: 0; background: transparent; font: inherit; }
</style>
